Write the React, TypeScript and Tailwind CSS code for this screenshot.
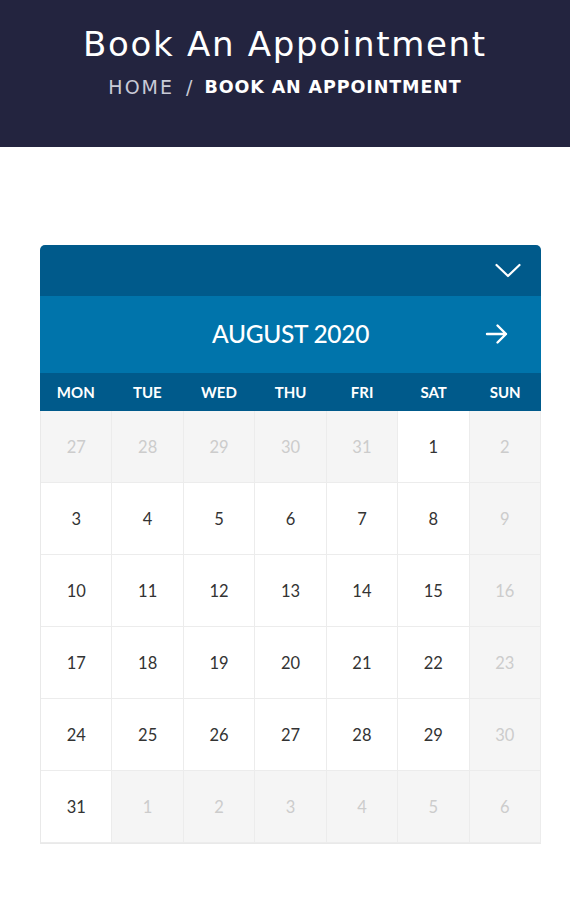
import React from "react";

const weeks: { d: number; muted: boolean }[][] = [
  [27, 28, 29, 30, 31, 1, 2].map((d, i) => ({ d, muted: i < 5 })),
  [3, 4, 5, 6, 7, 8, 9].map((d) => ({ d, muted: false })),
  [10, 11, 12, 13, 14, 15, 16].map((d) => ({ d, muted: false })),
  [17, 18, 19, 20, 21, 22, 23].map((d) => ({ d, muted: false })),
  [24, 25, 26, 27, 28, 29, 30].map((d) => ({ d, muted: false })),
  [31, 1, 2, 3, 4, 5, 6].map((d, i) => ({ d, muted: i > 0 })),
];

const days = ["MON", "TUE", "WED", "THU", "FRI", "SAT", "SUN"];

export default function App() {
  return (
    <div className="min-h-[900px] bg-white">
      <header
        className="h-[147px] bg-[#23243f] flex flex-col items-center pt-[23px]"
        style={{ fontFamily: '"DejaVu Sans", sans-serif' }}
      >
        <h1 className="text-[34px] leading-[42px] text-white tracking-[1.7px]">
          Book An Appointment
        </h1>
        <div className="mt-[10px] flex items-center text-[19px] leading-[24px]">
          <span className="text-[#c9cad6] tracking-[2px]">HOME</span>
          <span className="text-[#c9cad6] mx-[12px]">/</span>
          <span className="text-white font-bold text-[17.5px] tracking-[0.9px]">BOOK AN APPOINTMENT</span>
        </div>
      </header>

      <div className="pt-[98px] px-[40px] pr-[29px]">
        <div
          className="w-[501px] rounded-t-[5px] overflow-hidden"
          style={{ fontFamily: "Lato, sans-serif" }}
        >
          <div className="h-[51px] bg-[#005a8b] flex items-center justify-end pr-[20px]">
            <svg width="26" height="16" viewBox="0 0 26 16" fill="none">
              <path d="M1.5 2 L13 13 L24.5 2" stroke="white" strokeWidth="2.2" strokeLinecap="round" strokeLinejoin="round" />
            </svg>
          </div>
          <div className="h-[77px] bg-[#0074ab] relative flex items-center justify-center">
            <span className="text-white text-[24.5px] font-medium tracking-[-0.3px]">AUGUST 2020</span>
            <svg className="absolute right-[32px] top-[27px]" width="24" height="22" viewBox="0 0 24 22" fill="none">
              <path d="M2 11 H21 M12.5 2.5 L21 11 L12.5 19.5" stroke="white" strokeWidth="2.4" strokeLinecap="round" strokeLinejoin="round" />
            </svg>
          </div>
          <div className="h-[38px] bg-[#005a8b] grid grid-cols-7 items-center">
            {days.map((d) => (
              <div key={d} className="text-center text-white text-[15px] font-bold">
                {d}
              </div>
            ))}
          </div>
          <div className="grid grid-cols-7 border-l border-b border-[#e9e9e9]">
            {weeks.flat().map((c, i) => {
              const sun = i % 7 === 6;
              const muted = c.muted || sun;
              return (
                <div
                  key={i}
                  className={
                    "h-[72px] border-r border-b border-[#ececec] flex items-center justify-center pt-[2px] text-[16.5px] " +
                    (muted ? "bg-[#f5f5f5] text-[#cccccc]" : "bg-white text-[#333333]")
                  }
                >
                  {c.d}
                </div>
              );
            })}
          </div>
        </div>
      </div>
    </div>
  );
}
